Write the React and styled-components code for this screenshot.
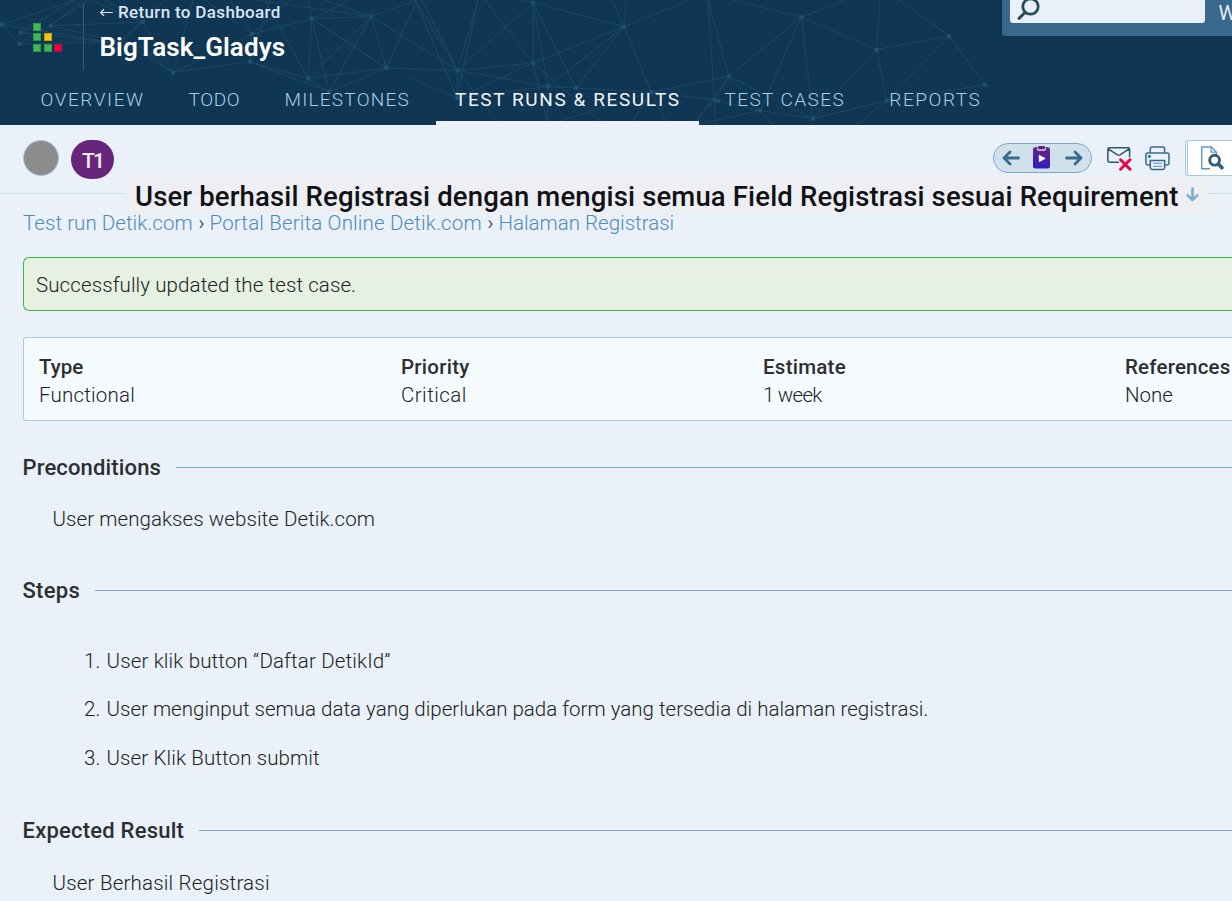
import React from "react";
import styled, { createGlobalStyle } from "styled-components";

const GlobalStyle = createGlobalStyle`
  *, *::before, *::after { box-sizing: border-box; }
  html, body { margin: 0; height: 100%; overflow: hidden; }
  body {
    background: #eaf1f8;
    color: #202225;
    font-family: Roboto, "Liberation Sans", sans-serif;
    font-size: 20.5px;
    font-weight: 300;
  }
`;

const Page = styled.div`
  width: 1232px;
  height: 901px;
  overflow: hidden;
`;

const Header = styled.header`
  position: relative;
  height: 125px;
  background: #0f3653;
  display: flex;
  flex-direction: column;
  justify-content: space-between;
`;

const Network = styled.svg`
  position: absolute;
  inset: 0;
  width: 1232px;
  height: 125px;
`;

const TopBar = styled.div`
  position: relative;
  display: flex;
  align-items: flex-start;
  height: 75px;
`;

const Logo = styled.div`
  display: grid;
  grid-template-columns: repeat(3, 8px);
  grid-auto-rows: 8px;
  gap: 2.7px;
  margin: 22.5px 0 0 33px;
  width: 50px;
`;

const LogoCell = styled.span`
  grid-column: ${(p) => p.$col};
  grid-row: ${(p) => p.$row};
  background: ${(p) => p.$color};
  border: 1px solid rgba(15, 54, 83, 0.28);
`;

const Project = styled.div`
  margin-top: 3px;
  height: 68px;
  padding-left: 15px;
  border-left: 1px solid #2f5d79;
`;

const BackLink = styled.a`
  display: flex;
  align-items: center;
  gap: 5px;
  height: 18px;
  font-size: 17px;
  font-weight: 500;
  letter-spacing: 0.34px;
  color: #dbe5f4;
`;

const ProjectName = styled.div`
  margin: 9px 0 0 0.5px;
  line-height: 34px;
  font-size: 26px;
  font-weight: 600;
  letter-spacing: 0.1px;
  color: #fff;
`;

const SearchPanel = styled.div`
  display: flex;
  width: 230px;
  height: 36px;
  margin-left: auto;
  padding-left: 8px;
  background: #39698a;
  border-bottom-left-radius: 3px;
  overflow: hidden;
`;

const SearchField = styled.div`
  flex: none;
  width: 195px;
  height: 23px;
  background: #eaf0f8;
  border-radius: 0 0 3px 3px;
  svg { display: block; margin-left: 6px; }
`;

const UserName = styled.span`
  margin-left: 13.5px;
  line-height: 26px;
  font-size: 20px;
  font-weight: 400;
  color: #e3ecf6;
  white-space: nowrap;
`;

const Nav = styled.nav`
  position: relative;
  display: flex;
  gap: 7px;
  height: 50px;
  padding-left: 21.5px;
`;

const Tab = styled.a`
  width: ${(p) => p.$width}px;
  padding-left: ${(p) => p.$inset || 19}px;
  line-height: 50px;
  font-size: 19px;
  font-weight: ${(p) => (p.$active ? 400 : 300)};
  letter-spacing: ${(p) => p.$track}px;
  white-space: nowrap;
  color: ${(p) => (p.$active ? "#f2f7fc" : "#a9cee6")};
  box-shadow: ${(p) => (p.$active ? "inset 0 -4px 0 #eaf1f8" : "none")};
`;

const Toolbar = styled.div`
  display: flex;
  align-items: flex-start;
  height: 69px;
  padding: 15px 0 0 23px;
  border-bottom: 1px solid #cbdfed;
`;

const StatusDot = styled.span`
  width: 36px;
  height: 36px;
  border-radius: 50%;
  background: #8c8c8c;
  border: 1px solid #a5c5da;
`;

const IdBadge = styled.span`
  width: 43px;
  height: 39px;
  margin-left: 12px;
  border-radius: 20px;
  background: #67267b;
  color: #f3edf5;
  font-size: 21px;
  font-weight: 500;
  line-height: 42px;
  letter-spacing: -1.8px;
  text-align: center;
`;

const Tools = styled.div`
  display: flex;
  align-items: flex-start;
  margin-left: auto;
`;

const Pager = styled.div`
  display: flex;
  align-items: center;
  justify-content: space-between;
  width: 99px;
  height: 30px;
  margin-top: 3px;
  padding: 0 8.5px 0 8px;
  border: 1.5px solid #7aabcf;
  border-radius: 15px;
  background: #d1e1ec;
  svg { display: block; }
  svg:nth-child(2) { margin: -1px 1px 0 0; }
`;

const ToolIcon = styled.svg`
  display: block;
  margin: 5.5px 0 0 ${(p) => p.$gap}px;
`;

const ViewButton = styled.div`
  width: 47px;
  height: 36px;
  margin-left: 15px;
  padding-left: 1px;
  border: 1px solid #a9cbe0;
  border-right: 0;
  border-radius: 3px 0 0 3px;
  background: #fff;
`;

const ViewButtonInner = styled.div`
  height: 34px;
  padding: 5px 0 0 12px;
  border-left: 1px solid #a9cbe0;
  border-radius: 2px 0 0 2px;
  svg { display: block; }
`;

const TitleRow = styled.div`
  position: relative;
  display: flex;
  align-items: center;
  width: 1083px;
  height: 37px;
  margin: -18px 0 0 126px;
  padding: 3px 0 0 9px;
  background: rgba(237, 239, 241, 0.85);
  svg { margin-top: -3px; }
`;

const Title = styled.h1`
  margin: 0;
  width: 1051px;
  font-size: 27.5px;
  font-weight: 500;
  letter-spacing: 0.15px;
  white-space: nowrap;
  color: #101114;
`;

const Breadcrumb = styled.div`
  position: relative;
  display: flex;
  height: 24px;
  margin: -2px 0 0 23px;
  line-height: 24px;
  white-space: nowrap;
`;

const Crumb = styled.a`
  width: ${(p) => p.$width}px;
  letter-spacing: ${(p) => p.$track}px;
  font-weight: 300;
  color: #4f8cbb;
`;

const CrumbArrow = styled.span`
  width: ${(p) => p.$width}px;
  font-size: 20px;
  font-weight: 300;
`;

const Notice = styled.div`
  height: 54px;
  margin: 22px 0 0 23px;
  padding-left: 12px;
  line-height: 54px;
  letter-spacing: 0.1px;
  border: 1px solid #3cb450;
  border-right: 0;
  border-radius: 6px 0 0 6px;
  background: #e7f1e2;
`;

const Properties = styled.dl`
  display: grid;
  grid-template-columns: repeat(4, 362px);
  width: 1209px;
  height: 84px;
  margin: 26px 0 0 23px;
  padding: 15px 0 0 15px;
  border: 1px solid #adcadd;
  border-right: 0;
  border-radius: 3px 0 0 3px;
  background: #f6fbff;
  line-height: 28px;
  overflow: hidden;
`;

const Label = styled.dt`
  font-weight: 500;
  letter-spacing: ${(p) => p.$track}px;
  color: #2d2e31;
`;

const Value = styled.dd`
  margin: 0;
  letter-spacing: ${(p) => p.$track}px;
`;

const Section = styled.section`
  margin-top: ${(p) => p.$top}px;
`;

const SectionTitle = styled.h2`
  display: flex;
  align-items: center;
  gap: 15px;
  height: 30px;
  margin: 0 0 0 22.5px;
  font-size: 22px;
  font-weight: 500;
  letter-spacing: ${(p) => p.$track}px;
  color: #2d2e31;
  white-space: nowrap;
  &::after {
    content: "";
    flex: 1;
    height: 1px;
    background: #7aaccf;
  }
`;

const Body = styled.p`
  margin: ${(p) => p.$top}px 0 0 52.5px;
  line-height: 30px;
  letter-spacing: ${(p) => p.$track}px;
`;

const StepList = styled.ol`
  display: grid;
  grid-template-rows: 48px 49px 30px;
  margin: 41px 0 0 84px;
  padding: 0;
  list-style: none;
`;

const Step = styled.li`
  display: flex;
  line-height: 30px;
  letter-spacing: ${(p) => p.$track}px;
  white-space: nowrap;
`;

const StepNumber = styled.span`
  width: 22.5px;
`;

const NODES = [
  [2, 24.5], [20.5, 32.5], [19.5, 44], [50.7, 25.8], [143, 22], [173, 72.5],
  [252, 34], [250, 61.7], [312, 18.7], [371, 16.5], [308, 78.5], [386.5, 68],
  [329, 92], [533, 2.5], [624, 26.7], [457.5, 70.3], [533, 63], [548, 86.5],
  [576, 88], [651, 92], [457, 98], [729, 76.3], [714.7, 100], [718, 101],
  [760, 110.5], [813, 118.7], [801.5, 17], [876.5, 49.6], [949, 36],
  [985, 84.8], [886.7, 100.7],
];

const EDGES = `
M2 24.5L75 0M2 24.5L20 44M2 24.5L110 42M20.5 32.5L75 0M20.5 32.5L110 42M19.5 44L110 42M19.5 44L90 0
M50.7 25.8L143 22L173 72.5M50.7 25.8L120 42M50.7 25.8L83 0M143 22L90 0M143 22L105 0M143 22L120 42L165 0
M173 72.5L135 42M173 72.5L250 61.7M173 72.5L252 34M173 72.5L193 0M173 72.5L120 40M252 34L205 0M252 34L230 0
M252 34L312 18.7M252 34L250 61.7L308 78.5M250 61.7L329 92M250 61.7L270 0M252 34L290 0M308 78.5L312 18.7L386.5 68
M308 78.5L371 16.5L386.5 68M308 78.5L386.5 68M312 18.7L371 16.5L255 0M312 18.7L329 92M312 18.7L308 0M308 78.5L329 92
M308 78.5L265 0M329 92L386.5 68L457.5 70.3M371 16.5L457.5 70.3M371 16.5L325 0M371 16.5L417 0L386.5 68M329 92L371 16.5
M312 18.7L350 0M457.5 70.3L415 0M457.5 70.3L422 0M457.5 70.3L478 0M457.5 70.3L533 2.5M457.5 70.3L533 63M457.5 70.3L548 86.5
M457.5 70.3L500 125M457.5 70.3L457 98L478 0M457 98L415 0M457 98L410 78M457 98L533 63L485 0M533 2.5L533 63L624 26.7L533 2.5
M533 2.5L548 86.5L624 26.7L576 88L533 2.5M533 2.5L520 0M533 63L548 125M533 63L605 125M548 86.5L651 92M548 86.5L457 98
M548 86.5L548 125M624 26.7L612 0M624 26.7L626 0M624 26.7L690 0M624 26.7L651 92L729 76.3M651 92L714.7 100M651 92L630 125
M651 92L668 125M548 125L651 92M708 0L729 76.3L801.5 17L813 118.7M708 0L716 125M732 0L801.5 17L845 0M801.5 17L760 110.5
M801.5 17L876.5 49.6M729 76.3L714.7 100L690 125M729 76.3L694 125M729 76.3L760 110.5L773 125M729 76.3L813 118.7
M718 101L760 110.5L694 125M760 110.5L813 118.7L876.5 49.6L949 36L985 84.8L886.7 100.7L813 118.7M876.5 49.6L880 0
M876.5 49.6L886.7 100.7L949 36L899 0M886.7 100.7L856 125`;

const TABS = [
  { name: "OVERVIEW", width: 141, track: 1.55 },
  { name: "TODO", width: 89, track: 0.6 },
  { name: "MILESTONES", width: 163.5, track: 1.25 },
  { name: "TEST RUNS & RESULTS", width: 263, track: 1.59, active: true },
  { name: "TEST CASES", width: 158, track: 1.4, inset: 18.5 },
  { name: "REPORTS", width: 129, track: 1.55, inset: 18.3 },
];

const PROPERTIES = [
  ["Type", "Functional", 0, 0.2],
  ["Priority", "Critical", 0.25, 0.45],
  ["Estimate", "1 week", 0.25, -0.75],
  ["References", "None", 0.2, 0],
];

const STEPS = [
  ["User klik button “Daftar DetikId”", 0.15],
  ["User menginput semua data yang diperlukan pada form yang tersedia di halaman registrasi.", 0.01],
  ["User Klik Button submit", 0.12],
];

const PagerArrow = ({ flip }) => (
  <svg width="18" height="16" viewBox="0 0 18 16" fill="none" stroke="#39698c"
    strokeWidth="2.8" strokeLinecap="round" strokeLinejoin="round">
    <path d={flip ? "M1.5 8H16M10 2l6 6-6 6" : "M16.5 8H2M8 2L2 8l6 6"} />
  </svg>
);

const Clipboard = () => (
  <svg width="17" height="23" viewBox="0 0 17 23">
    <defs>
      <linearGradient id="clip" x1="0.6" y1="0" x2="0.4" y2="1">
        <stop offset="0" stopColor="#67267b" />
        <stop offset="1" stopColor="#2d1cc0" />
      </linearGradient>
    </defs>
    <rect y="1.2" width="17" height="21.3" rx="2.2" fill="url(#clip)" />
    <rect x="5.2" y="0" width="6.6" height="3" rx="1" fill="#67267b" />
    <path d="M4.6 2.2v.6q0 1.3 1.3 1.3h5.2q1.3 0 1.3-1.3v-.6" fill="none" stroke="#f1ebf6" strokeWidth="1.3" />
    <path d="M6.2 9.2v6.6l6-3.3z" fill="#fff" stroke="#fff" strokeWidth=".7" strokeLinejoin="round" />
  </svg>
);

export default function App() {
  return (
    <Page>
      <GlobalStyle />
      <Header>
        <Network viewBox="0 0 1232 125">
          <path d={EDGES} fill="none" stroke="#1d4a66" strokeWidth="0.9" />
          {NODES.map(([x, y]) => (
            <circle key={`${x}-${y}`} cx={x} cy={y} r="2.2" fill="#225070" />
          ))}
        </Network>
        <TopBar>
          <Logo>
            <LogoCell $col={1} $row={1} $color="#3dbb50" />
            <LogoCell $col={1} $row={2} $color="#3dbb50" />
            <LogoCell $col={2} $row={2} $color="#ffc107" />
            <LogoCell $col={1} $row={3} $color="#3dbb50" />
            <LogoCell $col={2} $row={3} $color="#3dbb50" />
            <LogoCell $col={3} $row={3} $color="#ee0046" />
          </Logo>
          <Project>
            <BackLink>
              <svg width="14" height="10" viewBox="0 0 14 10" fill="none" stroke="#dbe5f4" strokeWidth="1.2">
                <path d="M13.8 5.5H1.6M5 2.2L1.6 5.5 5 8.8" />
              </svg>
              Return to Dashboard
            </BackLink>
            <ProjectName>BigTask_Gladys</ProjectName>
          </Project>
          <SearchPanel>
            <SearchField>
              <svg width="26" height="23" viewBox="0 0 26 23" fill="none" stroke="#2b4a60" strokeLinecap="round">
                <circle cx="14.5" cy="6.5" r="7.7" strokeWidth="2.8" />
                <path d="M9 12.5L3 18.3" strokeWidth="3" />
              </svg>
            </SearchField>
            <UserName>W</UserName>
          </SearchPanel>
        </TopBar>
        <Nav>
          {TABS.map((t) => (
            <Tab key={t.name} $width={t.width} $track={t.track} $inset={t.inset} $active={t.active}>{t.name}</Tab>
          ))}
        </Nav>
      </Header>

      <Toolbar>
        <StatusDot />
        <IdBadge>T1</IdBadge>
        <Tools>
          <Pager>
            <PagerArrow />
            <Clipboard />
            <PagerArrow flip />
          </Pager>
          <ToolIcon $gap={14.5} width="25" height="25" viewBox="0 0 25 25" fill="none">
            <path d="M12 16.2H2.3Q.9 16.2.9 14.8V3.1Q.9 1.7 2.3 1.7h18.9q1.4 0 1.4 1.4v8.4M1.5 3.2l9 5.6q1.2.7 2.4 0l9-5.6" stroke="#2f546e" strokeWidth="1.5" />
            <path d="M13.6 13.8l9.4 9.4M23 13.8l-9.4 9.4" stroke="#ea0048" strokeWidth="3" strokeLinecap="round" />
          </ToolIcon>
          <ToolIcon $gap={13.5} width="25" height="25" viewBox="0 0 25 25" fill="none" stroke="#39698c" strokeWidth="1.5">
            <path d="M5.3 6.8V2.7Q5.3.9 7.1.9h10.7q1.8 0 1.8 1.8v4.1" />
            <path d="M5.3 19H2.6Q.9 19 .9 17.3V8.7Q.9 6.9 2.7 6.9h19.5Q24 6.9 24 8.7v8.6q0 1.7-1.7 1.7h-2.7" />
            <path d="M5.3 14.4h14.3v7.3q0 1.7-1.7 1.7H7q-1.7 0-1.7-1.7z" />
            <path d="M8 17.3h9M8 20.3h9" stroke="#74a7cc" strokeWidth="1.3" />
            <circle cx="4.4" cy="10.3" r="1.6" fill="#009b78" stroke="none" />
          </ToolIcon>
          <ViewButton>
            <ViewButtonInner>
              <svg width="26" height="26" viewBox="0 0 26 26" fill="none">
                <path d="M10 22.7H1.7V1H11.5L16.5 6.2V8" stroke="#5e97c0" strokeWidth="1.4" />
                <path d="M11.2 1.2V6.2H16.2" stroke="#5e97c0" strokeWidth="1.3" />
                <circle cx="14.6" cy="14.2" r="4.9" stroke="#315d80" strokeWidth="2.9" />
                <path d="M18.4 18L22 21.7" stroke="#315d80" strokeWidth="3.6" strokeLinecap="round" />
              </svg>
            </ViewButtonInner>
          </ViewButton>
        </Tools>
      </Toolbar>

      <TitleRow>
        <Title>User berhasil Registrasi dengan mengisi semua Field Registrasi sesuai Requirement</Title>
        <svg width="13" height="15" viewBox="0 0 13 15" fill="none" stroke="#7aaccf" strokeWidth="2.6" strokeLinecap="round" strokeLinejoin="round">
          <path d="M6.5 1.5V13M1.7 8.4L6.5 13l4.8-4.6" />
        </svg>
      </TitleRow>

      <Breadcrumb>
        <Crumb $width={175.5} $track={0.06}>Test run Detik.com</Crumb>
        <CrumbArrow $width={11}>›</CrumbArrow>
        <Crumb $width={278} $track={0.16}>Portal Berita Online Detik.com</Crumb>
        <CrumbArrow $width={11}>›</CrumbArrow>
        <Crumb $width={180} $track={0}>Halaman Registrasi</Crumb>
      </Breadcrumb>

      <Notice>Successfully updated the test case.</Notice>

      <Properties>
        {PROPERTIES.map(([label, value, labelTrack, valueTrack]) => (
          <div key={label}>
            <Label $track={labelTrack}>{label}</Label>
            <Value $track={valueTrack}>{value}</Value>
          </div>
        ))}
      </Properties>

      <Section $top={31}>
        <SectionTitle $track={0.15}>Preconditions</SectionTitle>
        <Body $top={22} $track={0.07}>User mengakses website Detik.com</Body>
      </Section>
      <Section $top={41}>
        <SectionTitle $track={0.3}>Steps</SectionTitle>
        <StepList>
          {STEPS.map(([text, track], i) => (
            <Step key={text} $track={track}>
              <StepNumber>{i + 1}.</StepNumber>
              {text}
            </Step>
          ))}
        </StepList>
      </Section>
      <Section $top={42}>
        <SectionTitle $track={0.22}>Expected Result</SectionTitle>
        <Body $top={23} $track={0.2}>User Berhasil Registrasi</Body>
      </Section>
    </Page>
  );
}
